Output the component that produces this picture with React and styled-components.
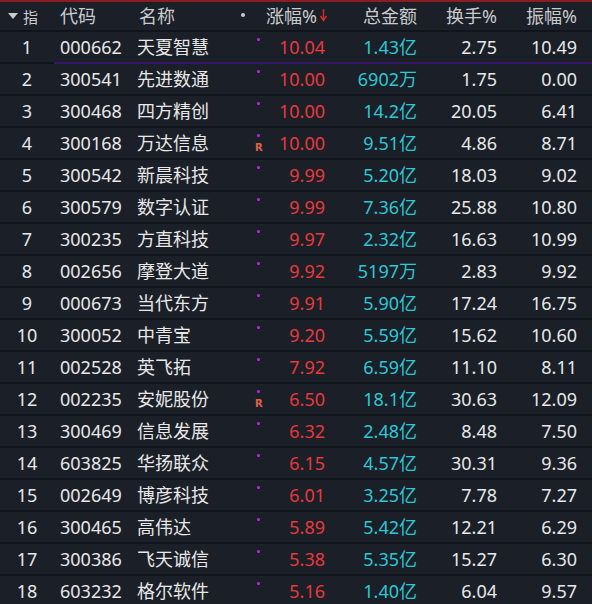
import React from 'react';
import styled, { createGlobalStyle } from 'styled-components';

const rows = [
	['1', '000662', '天夏智慧', '', '10.04', '1.43亿', '2.75', '10.49'],
	['2', '300541', '先进数通', '', '10.00', '6902万', '1.75', '0.00'],
	['3', '300468', '四方精创', '', '10.00', '14.2亿', '20.05', '6.41'],
	['4', '300168', '万达信息', 'R', '10.00', '9.51亿', '4.86', '8.71'],
	['5', '300542', '新晨科技', '', '9.99', '5.20亿', '18.03', '9.02'],
	['6', '300579', '数字认证', '', '9.99', '7.36亿', '25.88', '10.80'],
	['7', '300235', '方直科技', '', '9.97', '2.32亿', '16.63', '10.99'],
	['8', '002656', '摩登大道', '', '9.92', '5197万', '2.83', '9.92'],
	['9', '000673', '当代东方', '', '9.91', '5.90亿', '17.24', '16.75'],
	['10', '300052', '中青宝', '', '9.20', '5.59亿', '15.62', '10.60'],
	['11', '002528', '英飞拓', '', '7.92', '6.59亿', '11.10', '8.11'],
	['12', '002235', '安妮股份', 'R', '6.50', '18.1亿', '30.63', '12.09'],
	['13', '300469', '信息发展', '', '6.32', '2.48亿', '8.48', '7.50'],
	['14', '603825', '华扬联众', '', '6.15', '4.57亿', '30.31', '9.36'],
	['15', '002649', '博彦科技', '', '6.01', '3.25亿', '7.78', '7.27'],
	['16', '300465', '高伟达', '', '5.89', '5.42亿', '12.21', '6.29'],
	['17', '300386', '飞天诚信', '', '5.38', '5.35亿', '15.27', '6.30'],
	['18', '603232', '格尔软件', '', '5.16', '1.40亿', '6.04', '9.57'],
];

const GlobalStyle = createGlobalStyle`
	html, body {
		margin: 0;
		padding: 0;
		background: #1b1f27;
		overflow: hidden;
	}
`;

const Board = styled.div`
	width: 592px;
	height: 604px;
	background: #1b1f27;
	border-top: 2px solid #8c1c1f;
	box-sizing: border-box;
	font-family: 'Noto Sans', 'Noto Sans CJK SC', sans-serif;
	overflow: hidden;
`;

const Line = styled.div`
	display: grid;
	grid-template-columns: 54px 79px 104px 22px 66px 92px 80px 80px;
	align-items: center;
	height: ${(p) => (p.$head ? '28px' : '30px')};
	border-bottom: 2px solid #11141a;
	position: relative;
`;

const SelectLine = styled.div`
	position: absolute;
	left: 54px;
	right: 0;
	bottom: -2px;
	height: 2px;
	background: #37176a;
`;

const Cell = styled.div`
	font-size: 18px;
	line-height: 1;
	white-space: nowrap;
	color: ${(p) => p.$color || '#e8e8e8'};
	text-align: ${(p) => p.$align || 'left'};
	padding-left: ${(p) => p.$pl || 0}px;
	padding-right: ${(p) => p.$pr || 0}px;
`;

const HeadCell = styled(Cell)`
	color: #c9cbcf;
`;

const IndexHead = styled.div`
	display: flex;
	align-items: center;
	gap: 5px;
	padding-left: 8px;
	color: #c9cbcf;
	font-size: 15px;
`;

const Triangle = styled.span`
	width: 0;
	height: 0;
	border-left: 5px solid transparent;
	border-right: 5px solid transparent;
	border-top: 6px solid #c9cbcf;
`;

const Mark = styled.div`
	position: relative;
	height: ${(p) => (p.$head ? '28px' : '30px')};
`;

const Dot = styled.span`
	position: absolute;
	left: ${(p) => p.$left}px;
	top: ${(p) => p.$top}px;
	width: ${(p) => p.$size}px;
	height: ${(p) => p.$size}px;
	border-radius: 50%;
	background: ${(p) => p.$color};
`;

const RTag = styled.span`
	position: absolute;
	left: 18px;
	top: 14px;
	font-family: 'DejaVu Sans', sans-serif;
	font-size: 10px;
	font-weight: bold;
	color: #e0624c;
`;

const SortArrow = styled.svg`
	position: absolute;
	left: 320px;
	top: 6px;
`;

const red = '#e8393c';
const cyan = '#2cc8d6';

const App = () => (
	<>
		<GlobalStyle />
		<Board>
			<Line $head>
				<IndexHead>
					<Triangle />
					<span>指</span>
				</IndexHead>
				<HeadCell $pl={6}>代码</HeadCell>
				<HeadCell $pl={6}>名称</HeadCell>
				<Mark $head>
					<Dot $left={4} $top={11} $size={4} $color="#c9cbcf" />
				</Mark>
				<HeadCell $align="right" $pr={8}>涨幅%</HeadCell>
				<HeadCell $align="right">总金额</HeadCell>
				<HeadCell $align="right">换手%</HeadCell>
				<HeadCell $align="right">振幅%</HeadCell>
				<SortArrow width="7" height="14" viewBox="0 0 7 14">
					<path d="M3.5 1 V12" stroke="#e02b2b" strokeWidth="1.4" />
					<path d="M0.5 8 L3.5 12.5 L6.5 8" stroke="#e02b2b" strokeWidth="1.4" fill="none" />
				</SortArrow>
			</Line>
			{rows.map((r, i) => (
				<Line key={r[0]}>
					<Cell $align="center">{r[0]}</Cell>
					<Cell $pl={6}>{r[1]}</Cell>
					<Cell $pl={4}>{r[2]}</Cell>
					<Mark>
						<Dot $left={20} $top={6} $size={2.5} $color="#b224d6" />
						{r[3] && <RTag>{r[3]}</RTag>}
					</Mark>
					<Cell $align="right" $color={red}>{r[4]}</Cell>
					<Cell $align="right" $color={cyan}>{r[5]}</Cell>
					<Cell $align="right">{r[6]}</Cell>
					<Cell $align="right">{r[7]}</Cell>
					{i === 0 && <SelectLine />}
				</Line>
			))}
		</Board>
	</>
);

export default App;
